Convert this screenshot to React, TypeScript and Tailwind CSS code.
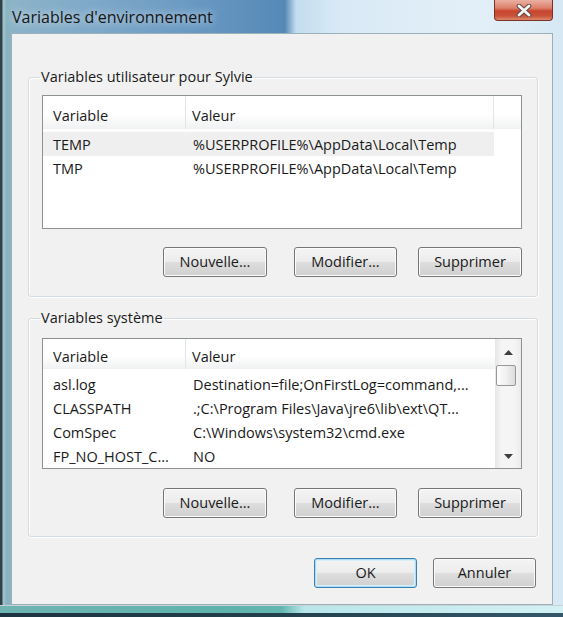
import React from 'react';

type EnvRow = {
  name: string;
  value: string;
};

const userVars: EnvRow[] = [
  { name: 'TEMP', value: '%USERPROFILE%\\AppData\\Local\\Temp' },
  { name: 'TMP', value: '%USERPROFILE%\\AppData\\Local\\Temp' },
];

const systemVars: EnvRow[] = [
  { name: 'asl.log', value: 'Destination=file;OnFirstLog=command,...' },
  { name: 'CLASSPATH', value: '.;C:\\Program Files\\Java\\jre6\\lib\\ext\\QT...' },
  { name: 'ComSpec', value: 'C:\\Windows\\system32\\cmd.exe' },
  { name: 'FP_NO_HOST_C...', value: 'NO' },
];

function VistaButton({
  label,
  className = '',
  isDefault = false,
}: {
  label: string;
  className?: string;
  isDefault?: boolean;
}) {
  return (
    <button
      className={`h-[30px] rounded-[3px] border text-[14.5px] leading-none text-[#1a1a1a] bg-[linear-gradient(180deg,#f4f4f4_0%,#ececec_48%,#dddddd_52%,#d0d0d0_100%)] ${
        isDefault
          ? 'border-[#3d7fae] shadow-[inset_0_0_0_1px_#a9def5,inset_0_0_0_2px_#d6f0fa]'
          : 'border-[#767676] shadow-[inset_0_0_0_1px_#fbfbfb]'
      } ${className}`}
    >
      {label}
    </button>
  );
}

function Arrow({ down = false }: { down?: boolean }) {
  return (
    <svg width="9" height="5" viewBox="0 0 9 5">
      <polygon
        points={down ? '0,0 9,0 4.5,5' : '0,5 9,5 4.5,0'}
        fill="#3f3f3f"
      />
    </svg>
  );
}

function Scrollbar() {
  return (
    <div className="w-[26px] flex flex-col items-start bg-[linear-gradient(90deg,#e6e6e6_0%,#f5f5f5_25%,#f5f5f5_75%,#ebebeb_100%)]">
      <div className="h-[26px] w-full flex items-center justify-center">
        <Arrow />
      </div>
      <div className="ml-[1px] w-[20px] h-[21px] rounded-[2px] border border-[#979797] bg-[linear-gradient(90deg,#fdfdfd_0%,#f0f0f0_50%,#dcdcdc_100%)]" />
      <div className="flex-1" />
      <div className="h-[24px] w-full flex items-center justify-center">
        <Arrow down />
      </div>
    </div>
  );
}

function ListView({
  rows,
  selected,
  scroll = false,
  heightClass,
}: {
  rows: EnvRow[];
  selected?: number;
  scroll?: boolean;
  heightClass: string;
}) {
  return (
    <div className={`flex w-[480px] overflow-hidden border border-[#8c9194] bg-white ${heightClass}`}>
      <div className="flex-1 min-w-0 flex flex-col">
        <div className="flex h-[33px] bg-[linear-gradient(180deg,#ffffff_0%,#ffffff_55%,#f0f1f2_100%)]">
          <div className="w-[143px] border-r border-[#e2e4e6] pl-[10px] pt-[6px] flex items-center">
            Variable
          </div>
          <div
            className={`pl-[6px] pt-[6px] flex items-center ${
              scroll ? 'flex-1' : 'w-[308px] border-r border-[#e2e4e6]'
            }`}
          >
            Valeur
          </div>
          {!scroll && <div className="flex-1" />}
        </div>
        <div className="pt-[3px]">
          {rows.map((row, index) => (
            <div
              key={index}
              className={`flex h-[24px] w-[451px] items-center pt-[2px] whitespace-nowrap ${
                selected === index ? 'bg-[#efefef]' : ''
              }`}
            >
              <div className="w-[143px] pl-[10px] overflow-hidden">{row.name}</div>
              <div className="pl-[7px] overflow-hidden">{row.value}</div>
            </div>
          ))}
        </div>
      </div>
      {scroll && <Scrollbar />}
    </div>
  );
}

function GroupBox({
  title,
  className,
  children,
}: {
  title: string;
  className: string;
  children: React.ReactNode;
}) {
  return (
    <fieldset
      className={`w-[510px] rounded-[3px] border border-[#d3dce2] shadow-[inset_1px_1px_0_#ffffff,1px_1px_0_#ffffff] pl-[13px] pr-[15px] ${className}`}
    >
      <legend className="-ml-[2px] px-[1px] leading-[18px]">{title}</legend>
      {children}
    </fieldset>
  );
}

function ActionButtons({ className }: { className: string }) {
  return (
    <div className={`flex justify-end ${className}`}>
      <VistaButton label="Nouvelle..." className="w-[104px]" />
      <VistaButton label="Modifier..." className="ml-[27px] w-[103px]" />
      <VistaButton label="Supprimer" className="ml-[21px] w-[104px]" />
    </div>
  );
}

export default function App() {
  return (
    <div className="w-[563px] h-[617px] overflow-hidden flex flex-col font-['Open_Sans','Liberation_Sans',sans-serif] text-[14.5px] text-[#1a1a1a] bg-[linear-gradient(90deg,#2f434c_0px,#2f434c_2px,#a6c3cb_3px,#86b3bf_7px,#8cb3c8_11px,#7fa9c9_90px,#6898c2_200px,#5689b6_285px,#c3ddef_296px,#d9eaf6_340px,#e3eff8_480px,#d6e8f4_100%)]">
      <div className="h-[33px] flex items-start justify-between">
        <span className="pl-[12px] pt-[7px] text-[16px] leading-[20px] text-[#161616] [text-shadow:0_0_8px_rgba(255,255,255,0.85)]">
          Variables d'environnement
        </span>
        <button className="mr-[10px] w-[59px] h-[21px] rounded-b-[4px] border border-t-0 border-[#7a3226] flex items-center justify-center bg-[linear-gradient(180deg,#eab0a3_0%,#dd8069_40%,#c8452f_55%,#c9533a_80%,#dc8a6c_100%)]">
          <svg width="18" height="13" viewBox="0 0 18 13">
            <path d="M4 2 L14 11 M14 2 L4 11" stroke="#5b4743" strokeWidth="4.6" strokeLinecap="round" />
            <path d="M4 2 L14 11 M14 2 L4 11" stroke="#f4f4f4" strokeWidth="2.8" strokeLinecap="round" />
          </svg>
        </button>
      </div>

      <div className="ml-[11px] w-[542px] h-[572px] border border-[#9cb0ba] bg-[#f1f1f1] flex flex-col pl-[16px]">
        <GroupBox title="Variables utilisateur pour Sylvie" className="mt-[34px] pt-[9px] pb-[19px]">
          <ListView rows={userVars} selected={0} heightClass="h-[134px]" />
          <ActionButtons className="mt-[18px]" />
        </GroupBox>

        <GroupBox title="Variables système" className="mt-[12px] pt-[11px] pb-[18px]">
          <ListView rows={systemVars} scroll heightClass="h-[131px]" />
          <ActionButtons className="mt-[19px]" />
        </GroupBox>

        <div className="mt-[21px] pr-[16px] flex justify-end gap-[16px]">
          <VistaButton label="OK" isDefault className="w-[103px]" />
          <VistaButton label="Annuler" className="w-[103px]" />
        </div>
      </div>

      <div className="h-[12px] flex flex-col">
        <div className="h-[8px] border-t border-[#c9d3d6] bg-[linear-gradient(90deg,#6fb4b2_0%,#5fb3ac_40%,#62b7b0_50%,#b9e6ea_54%,#d3f1f4_100%)]" />
        <div className="flex-1 bg-[linear-gradient(90deg,#1d3340_0%,#22404c_50%,#34586a_100%)]" />
      </div>
    </div>
  );
}
